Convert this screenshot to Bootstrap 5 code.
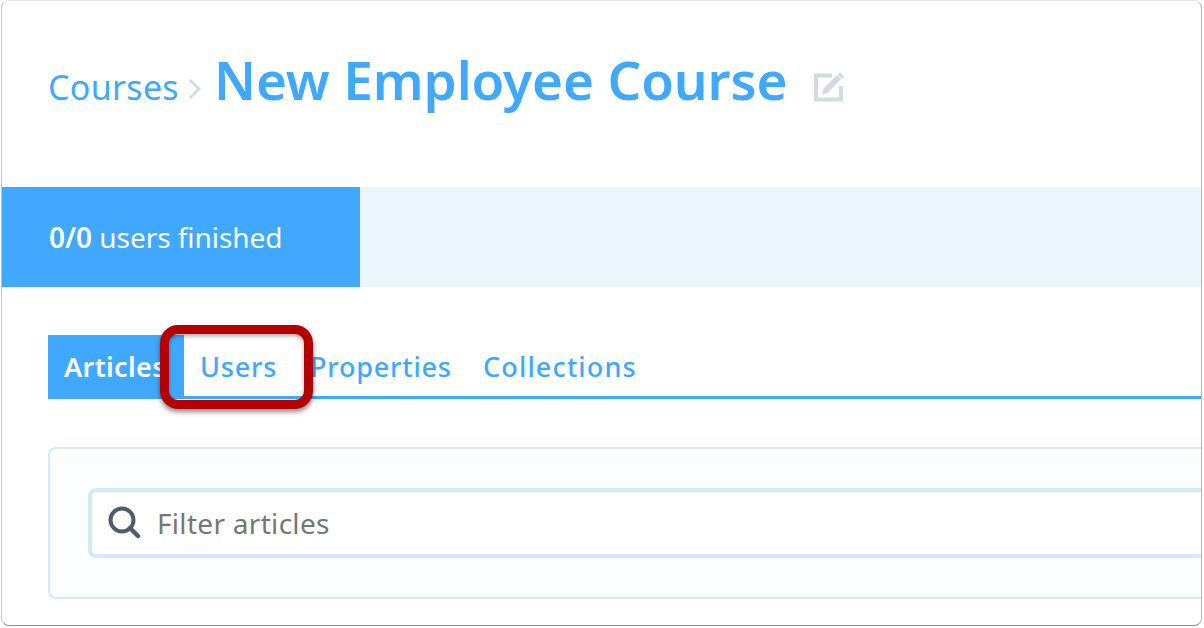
<!DOCTYPE html>
<html lang="en">
<head>
    <meta charset="UTF-8">
    <meta name="viewport" content="width=device-width, initial-scale=1.0">
    <title>New Employee Course</title>
    <link href="https://cdn.jsdelivr.net/npm/bootstrap@5.3.0/dist/css/bootstrap.min.css" rel="stylesheet">
    <style>
        html, body {
            height: 628px;
            overflow: hidden;
            background-color: #fff;
        }

        body {
            font-family: "Noto Sans", "Open Sans", sans-serif;
            padding: 0 2px 2px 1px;
        }

        .shot-frame {
            position: relative;
            height: 626px;
            overflow: hidden;
            background-color: #fff;
            border: 1px solid #e4e4e4;
            border-left-color: #c4c4c4;
            border-right-color: #b4b4b4;
            border-bottom-color: #8c8c8c;
            border-radius: 8px;
        }

        .course-head {
            height: 186px;
            padding: 46px 0 0 46px;
        }

        .crumb-link {
            color: #40a9ff;
            font-size: 34px;
            letter-spacing: 0.3px;
            text-decoration: none;
        }

        .crumb-sep {
            margin: 0 13px 0 9px;
        }

        .course-title {
            color: #40a9ff;
            font-size: 53px;
            font-weight: 600;
            letter-spacing: -0.1px;
            line-height: 66px;
            margin: 0 26px 0 0;
        }

        .edit-icon {
            align-self: flex-start;
            margin-top: 24px;
        }

        .progress-strip {
            height: 100px;
            background-color: #eaf6fc;
        }

        .progress-fill {
            width: 358px;
            padding-left: 47px;
            background-color: #40a9ff;
            color: #fff;
            font-size: 28px;
            letter-spacing: -0.05px;
        }

        .tab-row {
            margin: 48px 0 48px 46px;
            height: 64px;
            border-bottom: 3px solid #40a9ff;
        }

        .tab-row .nav-link {
            height: 61px;
            padding: 12px 16px 0;
            color: #40a9ff;
            font-size: 27px;
            font-weight: 500;
            letter-spacing: 0.8px;
            border-radius: 0;
            white-space: nowrap;
        }

        .tab-row .nav-link.active {
            width: 136px;
            background-color: #40a9ff;
            color: #fff;
            font-weight: 600;
            letter-spacing: 0.4px;
            overflow: hidden;
        }

        .tab-row .tab-wide {
            letter-spacing: 1.15px;
        }

        .tab-users {
            width: 110px;
        }

        .tab-props {
            width: 173px;
        }

        .filter-panel {
            height: 152px;
            margin-left: 46px;
            padding: 39px 0 39px 38px;
            background-color: #fbfdff;
            border: 2px solid #d4e9fb;
            border-right: 0;
            border-radius: 8px 0 0 8px;
        }

        .filter-box {
            height: 70px;
            padding-left: 15px;
            background-color: #fff;
            border: 4px solid #d4e9fb;
            border-right: 0;
            border-radius: 8px 0 0 8px;
        }

        .filter-input {
            padding: 0;
            border: 0;
            background: transparent;
            box-shadow: none;
            color: #444;
            font-size: 28px;
            letter-spacing: 0.3px;
        }

        .filter-input::placeholder {
            color: #767676;
            opacity: 1;
        }

        .callout-box {
            position: absolute;
            left: 158px;
            top: 324px;
            width: 153px;
            height: 84px;
            border: 9px solid #b30000;
            border-radius: 18px;
            box-shadow: 0 3px 5px rgba(0, 0, 0, 0.45), inset 0 2px 4px rgba(0, 0, 0, 0.35);
            pointer-events: none;
        }
    </style>
</head>
<body>
<div class="shot-frame">
    <div class="course-head d-flex align-items-baseline">
        <a class="crumb-link" href="#">Courses</a>
        <svg class="crumb-sep" width="13" height="22" viewBox="0 0 13 22">
            <path d="M2 2l9 9-9 9" fill="none" stroke="#d5dae2" stroke-width="3"/>
        </svg>
        <h1 class="course-title">New Employee Course</h1>
        <svg class="edit-icon" width="32" height="32" viewBox="0 0 32 32">
            <path d="M28 15v13.500H3V4.500h16" fill="none" stroke="#d5dae2" stroke-width="4"/>
            <path d="M9 23.500l1.500-6L24 4l4 4-13.500 14z" fill="#d5dae2"/>
            <path d="M25.500 2.500a2 2 0 0 1 2.800 0l1.700 1.700a2 2 0 0 1 0 2.800l-1 1-4.500-4.500z" fill="#d5dae2"/>
        </svg>
    </div>

    <div class="progress-strip d-flex">
        <div class="progress-fill d-flex align-items-center"><span><b class="fw-semibold">0/0</b> users finished</span></div>
    </div>

    <ul class="nav tab-row">
        <li class="nav-item"><a class="nav-link active" href="#">Articles</a></li>
        <li class="nav-item tab-users"><a class="nav-link" href="#">Users</a></li>
        <li class="nav-item tab-props"><a class="nav-link" href="#">Properties</a></li>
        <li class="nav-item"><a class="nav-link tab-wide" href="#">Collections</a></li>
    </ul>

    <div class="filter-panel">
        <div class="filter-box d-flex align-items-center gap-3">
            <svg width="34" height="34" viewBox="0 0 34 34" class="flex-shrink-0">
                <circle cx="15" cy="14" r="11.500" fill="none" stroke="#515b6b" stroke-width="4"/>
                <path d="M23 22l8 8" fill="none" stroke="#515b6b" stroke-width="4.500" stroke-linecap="round"/>
            </svg>
            <input class="form-control filter-input" type="text" placeholder="Filter articles">
        </div>
    </div>

    <div class="callout-box"></div>
</div>

<script src="https://cdn.jsdelivr.net/npm/bootstrap@5.3.0/dist/js/bootstrap.bundle.min.js"></script>
</body>
</html>
